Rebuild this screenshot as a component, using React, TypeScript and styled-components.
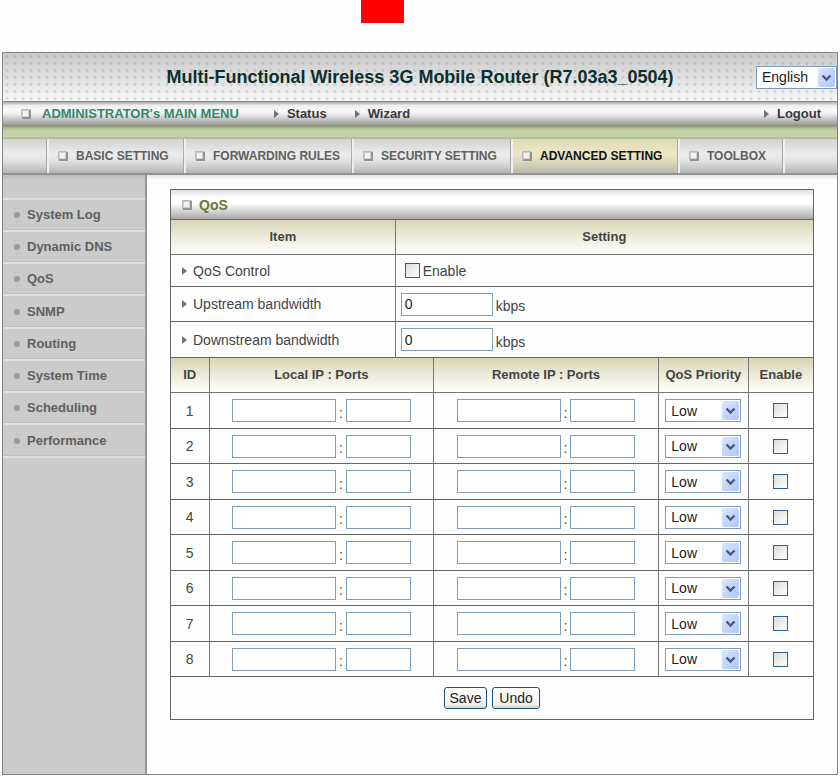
import React from "react";
import styled, { createGlobalStyle, css } from "styled-components";

const GlobalStyle = createGlobalStyle`
  * { box-sizing: border-box; }
  body {
    margin: 0;
    background: #fefefe;
    color: #444;
    font-family: "Liberation Sans", Arial, sans-serif;
    font-size: 14px;
    line-height: 18px;
  }
  input, select, button { font: inherit; color: #222; }
  a { color: inherit; text-decoration: none; }
`;

const Page = styled.div`
  min-height: 100vh;
  display: flex;
  flex-direction: column;
  padding: 0 2px 1px;
`;

const Top = styled.div`
  height: 52px;
`;

const RedMark = styled.div`
  width: 43px;
  height: 23px;
  margin-left: 43%;
  background: #f00;
`;

const Frame = styled.div`
  flex: 1;
  display: flex;
  flex-direction: column;
  border: 1px solid #848484;
`;

const Header = styled.header`
  height: 49px;
  display: grid;
  grid-template-columns: 1fr auto 1fr;
  align-items: center;
  border-bottom: 1px solid #8c8c8c;
  background:
    radial-gradient(circle, rgba(110, 110, 110, 0.2) 1px, transparent 2px) 0 0 / 8px 7px,
    linear-gradient(#c9c9c9, #f7f7f7);
`;

const Title = styled.h1`
  grid-column: 2;
  margin: 0;
  color: #0c2f2f;
  font-size: 18px;
  line-height: 20px;
  white-space: nowrap;
`;

const Language = styled.div`
  justify-self: end;
`;

const MainMenu = styled.nav`
  height: 23px;
  display: flex;
  align-items: center;
  padding: 0 16px 0 18px;
  color: #3a3a3a;
  font-size: 13px;
  font-weight: bold;
  background: linear-gradient(#aaa, #eee 15%, #fbf8fa 35%, #f2f0f2 50%, #9a9a9a);
`;

const MenuTitle = styled.span`
  display: flex;
  align-items: center;
  gap: 11px;
  margin-right: 35px;
  color: #2e8a6a;
`;

const MenuLink = styled.a<{ $end?: boolean }>`
  display: flex;
  align-items: center;
  gap: 8px;
  margin-right: 28px;
  ${(p) => p.$end && css`margin: 0 0 0 auto;`}
`;

const GreenBand = styled.div`
  height: 14px;
  background: linear-gradient(#7c8a6b, #b4c293 25%, #c5d4a6 45%, #c5d4a6 80%, #a9b58f);
`;

const Tabs = styled.nav`
  height: 36px;
  display: flex;
  padding-left: 43px;
  background: linear-gradient(#d2d2d2, #ececec 45%, #e2e2e2 65%, #b4b4b4);
  border-bottom: 2px solid #929292;
`;

const Tab = styled.a<{ $width: number; $active?: boolean }>`
  width: ${(p) => p.$width}px;
  display: flex;
  align-items: center;
  gap: 8px;
  padding-left: 11px;
  border-left: 1px solid #aaa;
  box-shadow: inset 2px 0 #eee;
  color: #606060;
  font-size: 12px;
  font-weight: bold;
  white-space: nowrap;
  ${(p) =>
    p.$active &&
    css`
      color: #111;
      background: linear-gradient(#dfdbb6, #ebe8c8 45%, #dddabd 65%, #bbb9ac);
    `}
`;

const TabEnd = styled.span`
  border-left: 1px solid #aaa;
  box-shadow: inset 2px 0 #eee;
  width: 3px;
`;

const Body = styled.div`
  flex: 1;
  display: flex;
`;

const Sidebar = styled.nav`
  width: 144px;
  flex-shrink: 0;
  padding-top: 23px;
  background: linear-gradient(#bbb, #cbcbcb 5px);
  border-right: 2px solid #979797;
`;

const SideList = styled.ul`
  margin: 0;
  padding: 0;
  list-style: none;
  border-top: 2px solid #e0e0e0;
`;

const SideItem = styled.li`
  height: 32px;
  border-bottom: 2px solid #e0e0e0;
  box-shadow: inset 0 -1px #c0c0c0;
  &:nth-child(4n) { height: 33px; }
`;

const SideLink = styled.a`
  height: 100%;
  display: flex;
  align-items: center;
  gap: 7px;
  padding-left: 11px;
  color: #606060;
  font-size: 13px;
  font-weight: bold;
  &::before {
    content: "";
    width: 6px;
    height: 6px;
    border-radius: 3px;
    background: #999;
  }
`;

const Content = styled.main`
  flex: 1;
  padding: 14px 23px;
  background: linear-gradient(#e4e4e4, #fefefe 5px);
`;

const Panel = styled.form`
  border: 1px solid #666;
`;

const PanelTitle = styled.h2`
  height: 30px;
  margin: 0;
  display: flex;
  align-items: center;
  gap: 7px;
  padding-left: 11px;
  border-bottom: 1px solid #666;
  color: #667a30;
  font-size: 14px;
  background: linear-gradient(#ddd, #fff 25%, #fff 45%, #a9a9a9);
`;

const Table = styled.table`
  width: 100%;
  table-layout: fixed;
  border-collapse: separate;
  border-spacing: 0;
`;

const Col = styled.col<{ $width?: string }>`
  width: ${(p) => p.$width || "auto"};
`;

const HeadCell = styled.th`
  height: 35px;
  padding: 0;
  border-bottom: 1px solid #777;
  background: linear-gradient(#d9d6b5, #fff);
  font-size: 13px;
  white-space: nowrap;
  &:not(:last-child) { border-right: 1px solid #777; }
`;

const Row = styled.tr<{ $height: number }>`
  height: ${(p) => p.$height}px;
`;

const Cell = styled.td<{ $left?: boolean }>`
  padding: 0 5px;
  border-bottom: 1px solid #666;
  text-align: ${(p) => (p.$left ? "left" : "center")};
  &:not(:last-child) { border-right: 1px solid #777; }
`;

const RuleRow = styled.tr`
  height: 35px;
  &:nth-child(odd) { height: 36px; }
`;

const Line = styled.div`
  display: flex;
  align-items: center;
  gap: 3px;
`;

const ItemLabel = styled.label`
  display: flex;
  align-items: center;
  gap: 6px;
  padding-left: 6px;
`;

const CheckLabel = styled.label`
  display: flex;
  align-items: center;
  gap: 3px;
  padding-left: 4px;
`;

const TextBox = styled.input<{ $width: number }>`
  width: ${(p) => p.$width}px;
  height: 23px;
  padding: 0 3px;
  border: 1px solid #7f9db9;
  background: #fff;
`;

const Check = styled.input`
  appearance: none;
  display: block;
  width: 15px;
  height: 15px;
  margin: 0;
  border: 1px solid #2f628f;
  background: linear-gradient(135deg, #dcdcd7, #fff);
`;

const Centered = styled.div<{ $gap?: number }>`
  display: flex;
  align-items: center;
  justify-content: center;
  gap: ${(p) => p.$gap || 0}px;
`;

const Unit = styled.span`
  padding-top: 4px;
`;

const SelectWrap = styled.div`
  display: inline-grid;
  align-items: center;
  vertical-align: middle;
  > * { grid-area: 1 / 1; }
`;

const SelectBox = styled.select<{ $width: number }>`
  appearance: none;
  width: ${(p) => p.$width}px;
  height: 23px;
  padding: 0 5px;
  border: 1px solid #7f9db9;
  border-radius: 0;
  background: #fff;
`;

const SelectArrow = styled.svg`
  justify-self: end;
  margin-right: 2px;
  pointer-events: none;
`;

const Footer = styled.div`
  height: 42px;
  display: flex;
  align-items: center;
  justify-content: center;
  gap: 5px;
`;

const PushButton = styled.button<{ $width: number }>`
  width: ${(p) => p.$width}px;
  height: 22px;
  padding: 0;
  border: 1px solid #1d4f7c;
  border-radius: 3px;
  background: linear-gradient(#fff, #f3f3ee 80%, #d9d3c6);
`;

const BoxIcon = () => (
  <svg width="10" height="10" viewBox="0 0 10 10" aria-hidden="true">
    <rect width="10" height="10" rx="1" fill="#cfcfcf" />
    <path d="M1 9H9V1" fill="none" stroke="#929292" strokeWidth="2" />
    <path d="M0.5 8V0.5H8" fill="none" stroke="#b8b8b8" />
    <rect x="2" y="2" width="5" height="5" fill="#f3f3f3" />
  </svg>
);

const Arrow = () => (
  <svg width="5" height="8" viewBox="0 0 5 8" aria-hidden="true">
    <path d="M0 0L5 4L0 8Z" fill="#707070" />
  </svg>
);

function Dropdown({ label, options, width }: { label: string; options: string[]; width: number }) {
  return (
    <SelectWrap>
      <SelectBox aria-label={label} $width={width}>
        {options.map((o) => <option key={o}>{o}</option>)}
      </SelectBox>
      <SelectArrow width="17" height="19" viewBox="0 0 17 19" aria-hidden="true">
        <defs>
          <linearGradient id="arrowFill" x1="0" y1="0" x2="1" y2="1">
            <stop offset="0" stopColor="#dbe5fe" />
            <stop offset="1" stopColor="#aec6f8" />
          </linearGradient>
        </defs>
        <rect width="17" height="19" rx="2" fill="url(#arrowFill)" />
        <path d="M4.5 7.5L8.5 11.5L12.5 7.5" fill="none" stroke="#46597f" strokeWidth="2.4" />
      </SelectArrow>
    </SelectWrap>
  );
}

function AddressPair({ name, row }: { name: string; row: number }) {
  return (
    <Centered $gap={3}>
      <TextBox $width={104} aria-label={`${name} IP ${row}`} />
      <Unit>:</Unit>
      <TextBox $width={65} aria-label={`${name} ports ${row}`} />
    </Centered>
  );
}

const tabs = [
  { text: "BASIC SETTING", width: 137 },
  { text: "FORWARDING RULES", width: 168 },
  { text: "SECURITY SETTING", width: 159 },
  { text: "ADVANCED SETTING", width: 167, active: true },
  { text: "TOOLBOX", width: 105 },
];

const sideLinks = ["System Log", "Dynamic DNS", "QoS", "SNMP", "Routing", "System Time", "Scheduling", "Performance"];

const bandwidths = [
  { id: "upstream", text: "Upstream bandwidth", height: 35 },
  { id: "downstream", text: "Downstream bandwidth", height: 36 },
];

export default function App() {
  return (
    <>
      <GlobalStyle />
      <Page>
        <Top><RedMark /></Top>
        <Frame>
          <Header>
            <Title>Multi-Functional Wireless 3G Mobile Router (R7.03a3_0504)</Title>
            <Language><Dropdown label="Language" options={["English"]} width={81} /></Language>
          </Header>
          <MainMenu>
            <MenuTitle><BoxIcon />ADMINISTRATOR's MAIN MENU</MenuTitle>
            <MenuLink href="#status"><Arrow />Status</MenuLink>
            <MenuLink href="#wizard"><Arrow />Wizard</MenuLink>
            <MenuLink href="#logout" $end><Arrow />Logout</MenuLink>
          </MainMenu>
          <GreenBand />
          <Tabs>
            {tabs.map((t) => (
              <Tab key={t.text} href="#tab" $width={t.width} $active={t.active}><BoxIcon />{t.text}</Tab>
            ))}
            <TabEnd />
          </Tabs>
          <Body>
            <Sidebar>
              <SideList>
                {sideLinks.map((s) => (
                  <SideItem key={s}><SideLink href="#page">{s}</SideLink></SideItem>
                ))}
              </SideList>
            </Sidebar>
            <Content>
              <Panel onSubmit={(e) => e.preventDefault()}>
                <PanelTitle><BoxIcon />QoS</PanelTitle>
                <Table>
                  <colgroup><Col $width="35%" /><Col /></colgroup>
                  <thead>
                    <tr><HeadCell scope="col">Item</HeadCell><HeadCell scope="col">Setting</HeadCell></tr>
                  </thead>
                  <tbody>
                    <Row $height={32}>
                      <Cell $left><ItemLabel htmlFor="qos"><Arrow />QoS Control</ItemLabel></Cell>
                      <Cell $left><CheckLabel><Check id="qos" type="checkbox" />Enable</CheckLabel></Cell>
                    </Row>
                    {bandwidths.map((b) => (
                      <Row key={b.id} $height={b.height}>
                        <Cell $left><ItemLabel htmlFor={b.id}><Arrow />{b.text}</ItemLabel></Cell>
                        <Cell $left>
                          <Line><TextBox id={b.id} $width={92} defaultValue="0" /><Unit>kbps</Unit></Line>
                        </Cell>
                      </Row>
                    ))}
                  </tbody>
                </Table>
                <Table>
                  <colgroup>
                    <Col $width="6%" /><Col $width="35%" /><Col $width="35%" /><Col $width="14%" /><Col />
                  </colgroup>
                  <thead>
                    <tr>
                      {["ID", "Local IP : Ports", "Remote IP : Ports", "QoS Priority", "Enable"].map((h) => (
                        <HeadCell key={h} scope="col">{h}</HeadCell>
                      ))}
                    </tr>
                  </thead>
                  <tbody>
                    {[1, 2, 3, 4, 5, 6, 7, 8].map((n) => (
                      <RuleRow key={n}>
                        <Cell>{n}</Cell>
                        <Cell><AddressPair name="Local" row={n} /></Cell>
                        <Cell><AddressPair name="Remote" row={n} /></Cell>
                        <Cell><Centered><Dropdown label={`QoS priority ${n}`} options={["Low", "Middle", "High"]} width={76} /></Centered></Cell>
                        <Cell><Centered><Check type="checkbox" aria-label={`Enable rule ${n}`} /></Centered></Cell>
                      </RuleRow>
                    ))}
                  </tbody>
                </Table>
                <Footer>
                  <PushButton type="submit" $width={43}>Save</PushButton>
                  <PushButton type="reset" $width={48}>Undo</PushButton>
                </Footer>
              </Panel>
            </Content>
          </Body>
        </Frame>
      </Page>
    </>
  );
}
